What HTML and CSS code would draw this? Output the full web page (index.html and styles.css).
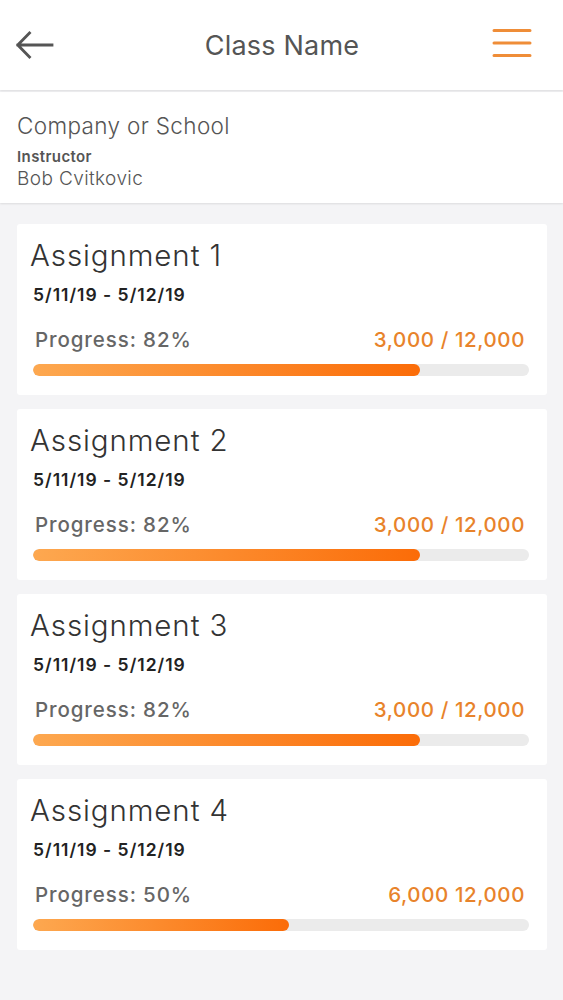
FILE: index.html
```html
<!DOCTYPE html>
<html lang="en">
<head>
  <meta charset="UTF-8">
  <title>Class Name</title>
  <link rel="stylesheet" href="styles.css">
</head>
<body>

  <header id="topbar">
    <button class="icon-btn" id="backBtn" aria-label="Back">
      <svg width="38" height="32" viewBox="0 0 38 32">
        <path d="M2 14 H36 M13.5 2 L1.8 14 L13.5 26" fill="none" stroke="#555" stroke-width="2.8" stroke-linecap="square"/>
      </svg>
    </button>
    <h1>Class Name</h1>
    <button class="icon-btn" id="menuBtn" aria-label="Menu">
      <svg width="40" height="30" viewBox="0 0 40 30">
        <path d="M2 2.5 H38 M2 15 H38 M2 27.5 H38" fill="none" stroke="#ef8d38" stroke-width="3" stroke-linecap="round"/>
      </svg>
    </button>
  </header>

  <section id="classInfo">
    <p class="org">Company or School</p>
    <p class="label">Instructor</p>
    <p class="instructor">Bob Cvitkovic</p>
  </section>

  <main id="assignments"></main>

  <script>
    const list = document.getElementById('assignments');

    const assignments = [
      { name: 'Assignment 1', dates: '5/11/19 - 5/12/19', pct: 82, fill: 78, count: '3,000 / 12,000' },
      { name: 'Assignment 2', dates: '5/11/19 - 5/12/19', pct: 82, fill: 78, count: '3,000 / 12,000' },
      { name: 'Assignment 3', dates: '5/11/19 - 5/12/19', pct: 82, fill: 78, count: '3,000 / 12,000' },
      { name: 'Assignment 4', dates: '5/11/19 - 5/12/19', pct: 50, fill: 51.6, count: '6,000 12,000' }
    ];

    assignments.forEach(a => {
      const card = document.createElement('div');
      card.classList.add('card');
      card.innerHTML = `
        <h2>${a.name}</h2>
        <p class="dates">${a.dates}</p>
        <div class="progress-row">
          <span class="progress-label">Progress: ${a.pct}%</span>
          <span class="progress-count">${a.count}</span>
        </div>
        <div class="bar"><div class="bar-fill" style="width:${a.fill}%"></div></div>
      `;
      list.appendChild(card);
    });
  </script>

</body>
</html>
```

FILE: styles.css
```css
body {
  margin: 0;
  padding: 0;
  background: #f4f4f6;
  font-family: 'Inter', 'Liberation Sans', sans-serif;
  color: #555;
}

p {
  margin: 0;
}

#topbar {
  height: 90px;
  background: #fff;
  display: flex;
  align-items: center;
  justify-content: space-between;
  padding: 0 31px 0 16px;
  box-shadow: 0 1px 2px rgba(0, 0, 0, 0.1);
  position: relative;
  z-index: 2;
}

#topbar h1 {
  margin: 0 0 0 18px;
  font-size: 27px;
  font-weight: 400;
  color: #555;
  letter-spacing: 0.2px;
}

.icon-btn {
  background: none;
  border: none;
  padding: 0;
  display: flex;
  cursor: pointer;
}

#backBtn {
  margin-top: 4px;
}

#menuBtn {
  margin-top: -4px;
}

#classInfo {
  background: #fff;
  margin-top: 2px;
  padding: 20px 17px 12px;
  box-shadow: 0 1px 2px rgba(0, 0, 0, 0.1);
  position: relative;
  z-index: 1;
}

.org {
  font-size: 22.5px;
  font-weight: 300;
  line-height: 28px;
  letter-spacing: 0.35px;
}

.label {
  font-size: 15px;
  font-weight: 600;
  line-height: 18px;
  margin-top: 8px;
  letter-spacing: 0.4px;
}

.instructor {
  font-size: 19px;
  font-weight: 300;
  line-height: 24px;
  margin-top: 1px;
  letter-spacing: 0.4px;
}

#assignments {
  display: flex;
  flex-direction: column;
  gap: 14px;
  padding: 21px 16px 40px 17px;
}

.card {
  background: #fff;
  border-radius: 3px;
  padding: 13px 18px 19px 16px;
}

.card h2 {
  margin: 0 0 0 -3px;
  font-size: 29.5px;
  font-weight: 300;
  line-height: 36px;
  color: #333;
  letter-spacing: 0.9px;
}

.dates {
  margin-top: 11px;
  font-size: 17.5px;
  font-weight: 600;
  line-height: 22px;
  color: #222;
  letter-spacing: 1px;
}

.progress-row {
  margin-top: 22px;
  display: flex;
  justify-content: space-between;
  align-items: baseline;
  padding: 0 4px 0 2px;
  line-height: 24px;
}

.progress-label {
  font-size: 20.5px;
  font-weight: 500;
  color: #666;
  letter-spacing: 0.9px;
}

.progress-count {
  font-size: 20.5px;
  font-weight: 500;
  color: #e8832b;
  letter-spacing: 0.6px;
}

.bar {
  margin-top: 12px;
  height: 12px;
  background: #ebebeb;
  border-radius: 6px;
  overflow: hidden;
}

.bar-fill {
  height: 100%;
  border-radius: 6px;
  background: linear-gradient(to right, #fda850, #fb6c08);
}
```
